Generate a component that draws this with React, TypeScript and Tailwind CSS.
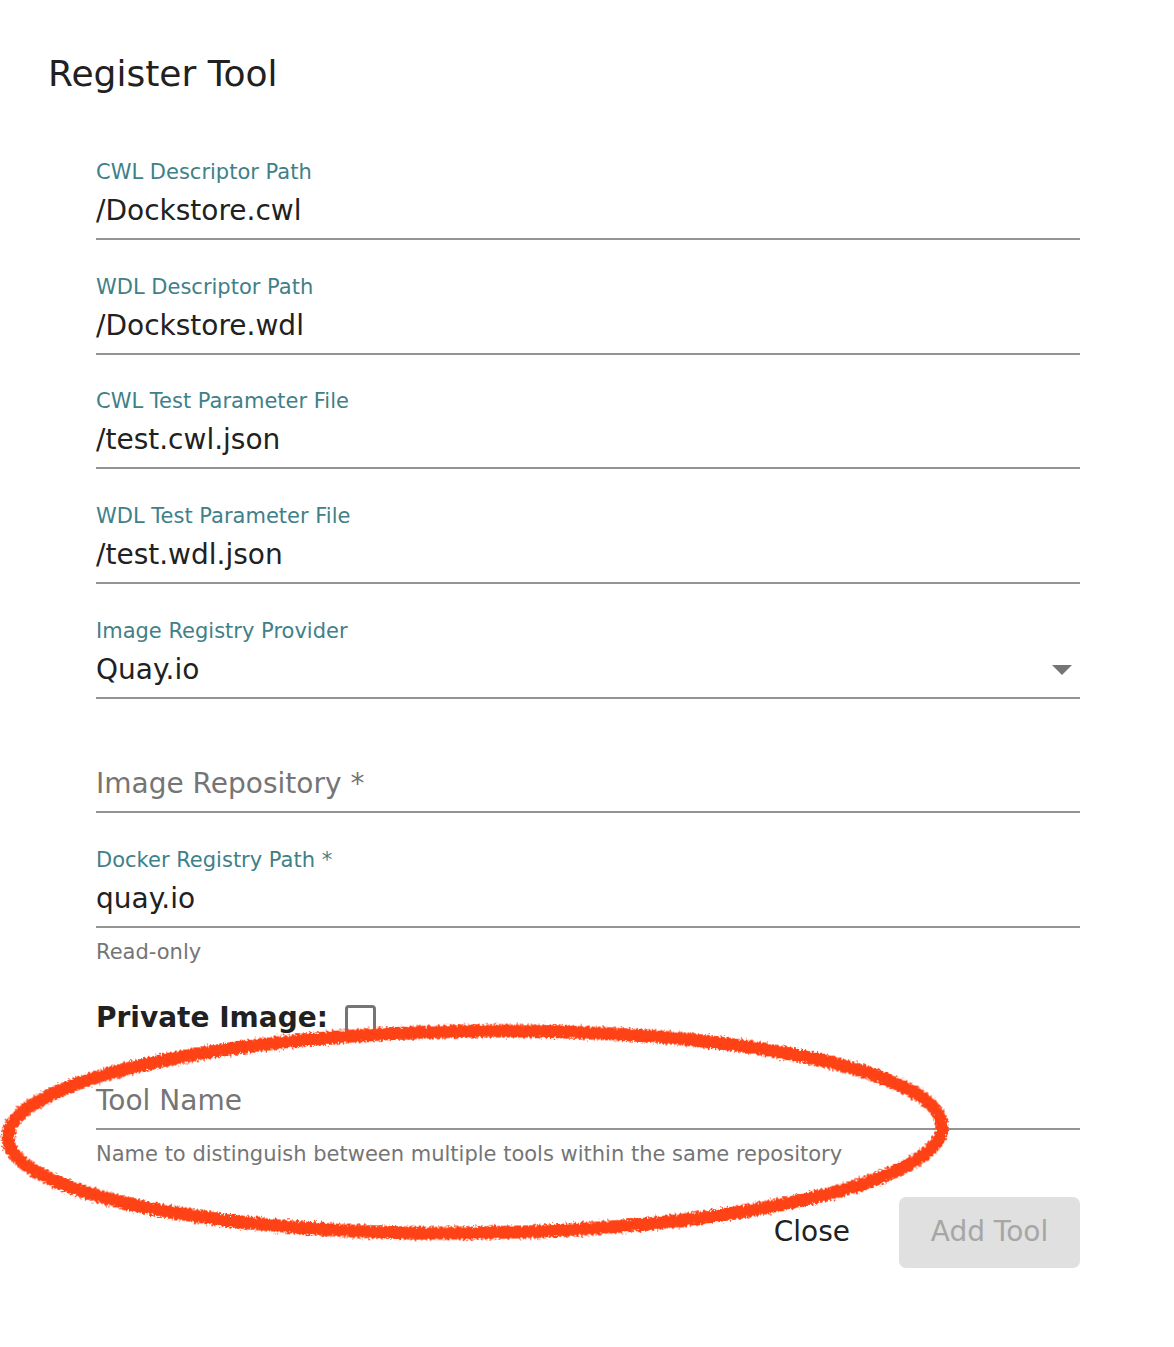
import { ReactNode } from 'react';

type FieldProps = {
  label?: string;
  value?: string;
  placeholder?: string;
  hint?: string;
  select?: boolean;
};

function Field({ label, value, placeholder, hint, select }: FieldProps) {
  return (
    <div className="flex flex-col">
      <div className="h-[28px] text-[21px] leading-[28px] text-[#408089] whitespace-nowrap">{label}</div>
      <div className="mt-[7px] h-[36px] flex items-center justify-between">
        {value ? (
          <span className="text-[28px] leading-[36px] text-[#212121]">{value}</span>
        ) : (
          <span className="text-[28px] leading-[36px] text-[#757575]">{placeholder}</span>
        )}
        {select && (
          <span className="mr-[8px] w-0 h-0 border-l-[10px] border-r-[10px] border-t-[10px] border-l-transparent border-r-transparent border-t-[#757575]" />
        )}
      </div>
      <div className="mt-[9px] h-[2px] bg-[#949494]" />
      {hint && <div className="mt-[12px] text-[21px] leading-[24px] text-[#757575]">{hint}</div>}
    </div>
  );
}

function Scribble() {
  return (
    <svg className="absolute left-0 top-0 pointer-events-none" width="1174" height="1347" viewBox="0 0 1174 1347">
      <defs>
        <filter id="rough" x="-5%" y="-20%" width="110%" height="140%">
          <feTurbulence type="fractalNoise" baseFrequency="0.45" numOctaves="2" seed="3" result="noise" />
          <feDisplacementMap in="SourceGraphic" in2="noise" scale="7" xChannelSelector="R" yChannelSelector="G" />
        </filter>
      </defs>
      <g filter="url(#rough)" transform="rotate(-0.7 475 1132)">
        <ellipse cx="475" cy="1132" rx="467" ry="101" fill="none" stroke="#ff4315" strokeWidth="13" />
        <ellipse cx="476" cy="1131" rx="466" ry="103" fill="none" stroke="#ff4315" strokeWidth="5" strokeOpacity="0.7" />
      </g>
    </svg>
  );
}

function Button({ children, disabled }: { children: ReactNode; disabled?: boolean }) {
  return disabled ? (
    <button className="h-[71px] w-[181px] rounded-[7px] bg-[#e0e0e0] text-[28px] text-[#a6a6a6]">{children}</button>
  ) : (
    <button className="h-[71px] px-[28px] rounded-[7px] text-[28px] text-[#212121]">{children}</button>
  );
}

export default function App() {
  return (
    <div className="relative w-[1174px] h-[1347px] bg-white font-['DejaVu_Sans',sans-serif] overflow-hidden">
      <h2 className="pl-[48px] pt-[54px] text-[36px] leading-[40px] text-[#212121] font-normal">Register Tool</h2>

      <div className="mt-[64px] ml-[96px] w-[984px] flex flex-col">
        <div className="flex flex-col gap-[32.67px]">
          <Field label="CWL Descriptor Path" value="/Dockstore.cwl" />
          <Field label="WDL Descriptor Path" value="/Dockstore.wdl" />
          <Field label="CWL Test Parameter File" value="/test.cwl.json" />
          <Field label="WDL Test Parameter File" value="/test.wdl.json" />
          <Field label="Image Registry Provider" value="Quay.io" select />
          <Field placeholder="Image Repository *" />
          <Field label="Docker Registry Path *" value="quay.io" hint="Read-only" />
        </div>

        <div className="mt-[36px] h-[36px] flex items-center gap-[17px]">
          <span className="text-[28px] leading-[36px] font-bold text-[#212121]">Private Image:</span>
          <span className="mt-[5px] w-[31px] h-[31px] rounded-[4px] border-[3.5px] border-[#757575]" />
        </div>

        <div className="mt-[12px]">
          <Field placeholder="Tool Name" hint="Name to distinguish between multiple tools within the same repository" />
        </div>

        <div className="mt-[31px] flex justify-end items-center gap-[21px]">
          <Button>Close</Button>
          <Button disabled>Add Tool</Button>
        </div>
      </div>

      <Scribble />
    </div>
  );
}
